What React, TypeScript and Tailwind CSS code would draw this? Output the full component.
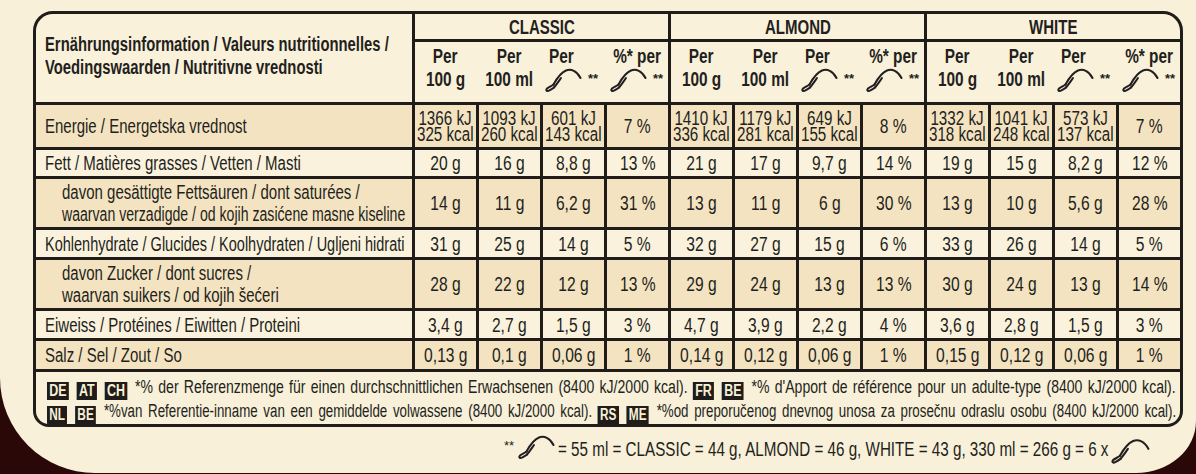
import React from "react";

type Cell = string | [string, string];

const rows: { label: string[]; squeeze?: string[]; sub?: boolean; tone: "tan" | "light"; values: Cell[] }[] = [
  {
    label: ["Energie / Energetska vrednost"],
    tone: "tan",
    values: [
      ["1366 kJ", "325 kcal"], ["1093 kJ", "260 kcal"], ["601 kJ", "143 kcal"], "7 %",
      ["1410 kJ", "336 kcal"], ["1179 kJ", "281 kcal"], ["649 kJ", "155 kcal"], "8 %",
      ["1332 kJ", "318 kcal"], ["1041 kJ", "248 kcal"], ["573 kJ", "137 kcal"], "7 %",
    ],
  },
  {
    label: ["Fett / Matières grasses / Vetten / Masti"],
    tone: "light",
    values: ["20 g", "16 g", "8,8 g", "13 %", "21 g", "17 g", "9,7 g", "14 %", "19 g", "15 g", "8,2 g", "12 %"],
  },
  {
    label: ["davon gesättigte Fettsäuren / dont saturées /", "waarvan verzadigde / od kojih zasićene masne kiseline"],
    squeeze: ["scale-x-[0.75]", "scale-x-[0.705]"],
    sub: true,
    tone: "tan",
    values: ["14 g", "11 g", "6,2 g", "31 %", "13 g", "11 g", "6 g", "30 %", "13 g", "10 g", "5,6 g", "28 %"],
  },
  {
    label: ["Kohlenhydrate / Glucides / Koolhydraten / Ugljeni hidrati"],
    squeeze: ["scale-x-[0.725]"],
    tone: "light",
    values: ["31 g", "25 g", "14 g", "5 %", "32 g", "27 g", "15 g", "6 %", "33 g", "26 g", "14 g", "5 %"],
  },
  {
    label: ["davon Zucker / dont sucres /", "waarvan suikers / od kojih šećeri"],
    sub: true,
    tone: "tan",
    values: ["28 g", "22 g", "12 g", "13 %", "29 g", "24 g", "13 g", "13 %", "30 g", "24 g", "13 g", "14 %"],
  },
  {
    label: ["Eiweiss / Protéines / Eiwitten / Proteini"],
    tone: "light",
    values: ["3,4 g", "2,7 g", "1,5 g", "3 %", "4,7 g", "3,9 g", "2,2 g", "4 %", "3,6 g", "2,8 g", "1,5 g", "3 %"],
  },
  {
    label: ["Salz / Sel / Zout / So"],
    tone: "tan",
    values: ["0,13 g", "0,1 g", "0,06 g", "1 %", "0,14 g", "0,12 g", "0,06 g", "1 %", "0,15 g", "0,12 g", "0,06 g", "1 %"],
  },
];

const groups = ["CLASSIC", "ALMOND", "WHITE"];

// the print uses a condensed face; squeeze Liberation Sans to get the same widths
function N({ children, left, squeeze = "scale-x-[0.75]" }: { children: React.ReactNode; left?: boolean; squeeze?: string }) {
  return (
    <span className={`inline-block whitespace-nowrap ${squeeze} ${left ? "origin-left" : "origin-center"}`}>
      {children}
    </span>
  );
}

function Stick({ className = "" }: { className?: string }) {
  return (
    <svg viewBox="0 0 38 24" className={className} fill="none" stroke="#231f20" strokeWidth={2} strokeLinecap="round" strokeLinejoin="round">
      <path d="M36.5 10 C33 3 27 0.5 22 2.5 C16 5 12.5 11 9.5 16.5" />
      <path d="M10 19.5 C12.5 16.5 14.5 13.5 17 10" />
      <path d="M9.5 16.5 C7 18.5 4.5 19 2.8 20.8 C1.6 22.4 3 23.6 5 22.6 C7 21.6 8.6 20.6 10 19.5" />
    </svg>
  );
}

function Badge({ children }: { children: React.ReactNode }) {
  return (
    <span className="mr-[3px] inline-flex h-[18px] items-center bg-[#1f1c19] px-[3px] align-[-3px] text-[16px] font-bold leading-none text-[#f8f0d8]">
      {children}
    </span>
  );
}

export default function App() {
  return (
    <div className="h-[474px] w-[1196px] overflow-hidden bg-[#2a0807] font-['Liberation_Sans',Arial,sans-serif] text-[#231f20]">
      <div className="h-[473px] rounded-bl-[95px] rounded-br-[60px_52px] bg-[#f8f0d8] pl-[33px] pt-[11px]">
        <div className="grid w-[1150px] grid-cols-[376px_repeat(12,61px)] grid-rows-[25px_60px_42px_26px_48px_27px_48px_27px_28px_52px] gap-[3px] overflow-hidden rounded-t-[20px] rounded-b-[16px] border-[3px] border-[#1f1c19] bg-[#1f1c19]">
          {/* header */}
          <div className="row-span-2 flex flex-col bg-[#f9f1da] pl-[9px] pt-[19px] text-[20px] font-bold leading-[23px]">
            <N left squeeze="scale-x-[0.74]">Ernährungsinformation / Valeurs nutritionnelles /</N>
            <N left squeeze="scale-x-[0.74]">Voedingswaarden / Nutritivne vrednosti</N>
          </div>
          {groups.map((g) => (
            <div key={g} className="col-span-4 flex items-center justify-center bg-[#f9f1da] text-[20px] font-bold">
              <N>{g}</N>
            </div>
          ))}
          {groups.map((g) => (
            <div key={g + "-sub"} className="col-span-4 grid grid-cols-[61px_61px_61px_61px] gap-[3px] bg-[#f9f1da] pt-[3px] text-[20px] font-bold leading-[23px]">
              <div className="flex flex-col items-center">
                <N squeeze="scale-x-[0.77]">Per</N>
                <N squeeze="scale-x-[0.77]">100 g</N>
              </div>
              <div className="flex flex-col items-center">
                <N squeeze="scale-x-[0.77]">Per</N>
                <N squeeze="scale-x-[0.77]">100 ml</N>
              </div>
              <div className="relative pl-[6px]">
                <N left squeeze="scale-x-[0.77]">Per</N>
                <Stick className="absolute left-[1px] top-[23px] h-[24px] w-[38px]" />
                <span className="absolute left-[45px] top-[27px] text-[13px] font-bold leading-none">**</span>
              </div>
              <div className="relative flex justify-center">
                <N squeeze="scale-x-[0.77]">%* per</N>
                <Stick className="absolute left-[2px] top-[23px] h-[24px] w-[38px]" />
                <span className="absolute left-[46px] top-[27px] text-[13px] font-bold leading-none">**</span>
              </div>
            </div>
          ))}

          {/* body */}
          {rows.map((r, i) => {
            const bg = r.tone === "tan" ? "bg-[#f3e3c1]" : "bg-[#faf2dd]";
            return (
              <React.Fragment key={i}>
                <div className={`flex flex-col justify-center text-[20px] ${r.sub ? "pl-[26px] leading-[22px]" : "pl-[9px] leading-[20px]"} ${bg}`}>
                  {r.label.map((l, k) => (
                    <N key={l} left squeeze={r.squeeze?.[k] ?? "scale-x-[0.75]"}>
                      {l}
                    </N>
                  ))}
                </div>
                {r.values.map((v, j) => (
                  <div key={j} className={`flex flex-col items-center justify-center text-[20px] ${bg}`}>
                    {Array.isArray(v) ? (
                      <>
                        <span className="inline-block scale-x-[0.76] whitespace-nowrap leading-[16px]">{v[0]}</span>
                        <span className="inline-block scale-x-[0.76] whitespace-nowrap leading-[17px]">{v[1]}</span>
                      </>
                    ) : (
                      <span className="inline-block scale-x-[0.78] whitespace-nowrap leading-[20px]">{v}</span>
                    )}
                  </div>
                ))}
              </React.Fragment>
            );
          })}

          {/* footnotes */}
          <div className="col-span-13 overflow-hidden bg-[#f8f0d8] pl-[11px] pt-[4px] leading-[23px]">
            <div className="w-[1447px] origin-left scale-x-[0.78] text-[18px] [text-align-last:justify]">
              <Badge>DE</Badge> <Badge>AT</Badge> <Badge>CH</Badge> *% der Referenzmenge für einen durchschnittlichen Erwachsenen (8400 kJ/2000 kcal).{" "}
              <Badge>FR</Badge> <Badge>BE</Badge> *% d'Apport de référence pour un adulte-type (8400 kJ/2000 kcal).
            </div>
            <div className="w-[1526px] origin-left scale-x-[0.74] text-[18px] [text-align-last:justify]">
              <Badge>NL</Badge> <Badge>BE</Badge> *%van Referentie-inname van een gemiddelde volwassene (8400 kJ/2000 kcal).{" "}
              <Badge>RS</Badge> <Badge>ME</Badge> *%od preporučenog dnevnog unosa za prosečnu odraslu osobu (8400 kJ/2000 kcal).
            </div>
          </div>
        </div>

        {/* serving note */}
        <div className="mt-[8px] flex items-end justify-end pr-[46px] text-[20px] leading-[22px]">
          <span className="mb-[8px] text-[13px] leading-none">**</span>
          <Stick className="mx-[3px] mb-[1px] h-[24px] w-[38px]" />
          <span className="inline-block w-[551px]">
            <span className="inline-block origin-left scale-x-[0.76] whitespace-nowrap">
              = 55 ml = CLASSIC = 44 g, ALMOND = 46 g, WHITE = 43 g, 330 ml = 266 g = 6 x
            </span>
          </span>
          <Stick className="mb-[-4px] ml-[1px] h-[26px] w-[40px]" />
        </div>
      </div>
    </div>
  );
}
